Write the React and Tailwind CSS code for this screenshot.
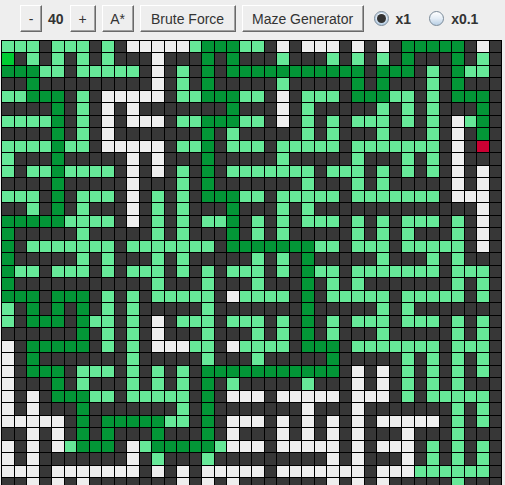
import { useState } from "react";

// # wall, w open, l explored, d final path, s start, e end
const MAZE = [
  "lll#lll#l#wwwwwldddll#w#www#w#w#ddddd#w#",
  "s#l#l#l#l###w###d#d###l###l#l#l#d###d#l#",
  "dddll#lllll#w#l#d#ddddddddddd#ddd#l#dll#",
  "##d#########w#l#d#####l#####d#d###l#d###",
  "llddd#l#wwwww#lldddll#w#lll#dddll#l#ddd#",
  "####d#l#w#w#######d###w#l#####l#l#l###d#",
  "lllld#l#w#www#lldddll#w#l#l#lll#l#l#wld#",
  "####d#l#w#######d#l#####l#l###l###l#w#d#",
  "lllldll#wwwww#lld#lll#lllll#lllllll#w#e#",
  "l###d#####w#w###d#####l#####l###l#l#w###",
  "l#lldllll#w#w#l#d#lllllll#lll#l#l#l#w#w#",
  "####d#####w###l#d#######l###l#l#####w#w#",
  "lll#d#lll#w#l#l#dddll#lllll#lllllll#www#",
  "##l#d#l###w#l#l###d###l#l#############w#",
  "dddddllll#w#l#l#lld#l#l#lll#l#l#lll#l#w#",
  "d#####l#####l#l###d#l#l#####l#l#l###l#w#",
  "d#lllllll#lllllll#dddddddll#lll#lllll#w#",
  "d#####l#l###l#l#####l#l#d#####l###l#l###",
  "dll#lll#l#lll#l#l#lll#l#dll#lllllll#lll#",
  "d###########l###l###l###d#l#l#######l#l#",
  "ddd#ddd#l#l#lllll#wllll#d#lllll#lllll#l#",
  "l#d#d#d#l#l#####l#######d#####l#l#######",
  "l#ddd#dll#l#w#lll#lll#l#d#l#lll#lll#l#l#",
  "######d#l#l#w###l###l#l#d#l###l#####l#l#",
  "w#ddddd#l#l#wwwll#wllll#ddd#lllllll#lll#",
  "w#d#######l#####l###l#####d#####l#l#l#l#",
  "w#ddd#lll#l#l#l#ddddddddddd#w#w#l#l#l#l#",
  "w###d#l###l#l#l#d#l#####l###w#w#l#l#l###",
  "w#w#dddll#lllll#d#www#wwwww#www#l#lllll#",
  "w#w###d#######l#d#######w###w#######l#l#",
  "wwwww#d#dddddll#d#www#w#w#w#w#wwwww#l#l#",
  "##w#w#d#d###d###d#w###w#w#w#w###w###l###",
  "w#w#wlddd#wldddddlwww#wwwww#w#www#l#l#l#",
  "w#w#######w#l###l#########w#w###w#l#l#l#",
  "www#wwwwwww#w#w#wwwww#wwwwwww#wwwllllll#",
  "##w#w#w#######w#w#w#######w#w#w#####l###",
];

const FILL = {
  "#": "bg-[#373737]",
  w: "bg-[#eeeeee]",
  l: "bg-[#66e898]",
  d: "bg-[#039637]",
  s: "bg-[#00cc33]",
  e: "bg-[#cc0033]",
};

function PushButton({ children, width, onClick }) {
  return (
    <button
      type="button"
      onClick={onClick}
      className={`h-[27px] shrink-0 whitespace-nowrap border border-t-white border-l-white border-r-[#696969] border-b-[#696969] bg-[#eeeeee] text-center leading-6 shadow-[inset_-1px_-1px_0_#a0a0a0] ${width}`}
    >
      {children}
    </button>
  );
}

function Speed({ value, checked, onChange }) {
  return (
    <label className="flex items-center gap-[7px] font-bold">
      <input
        type="radio"
        name="speed"
        value={value}
        checked={checked}
        onChange={() => onChange(value)}
        className="grid size-[15px] appearance-none place-items-center rounded-full border border-[#7a8a99] bg-linear-to-b from-white via-[#e4edf6] to-[#b8cfe5] before:size-[9px] before:rounded-full checked:shadow-[inset_0_0_0_1px_#b8cfe5] checked:before:bg-[#333333]"
      />
      {value}
    </label>
  );
}

export default function App() {
  const [size, setSize] = useState(40);
  const [speed, setSpeed] = useState("x1");

  return (
    <div className="h-screen overflow-hidden bg-[#eeeeee] font-['Liberation_Sans',Arial,sans-serif] text-sm text-[#333333]">
      <header className="flex h-10 items-center gap-1.5 pb-[3px] pl-5">
        <PushButton width="w-[22px]" onClick={() => setSize(size - 1)}>-</PushButton>
        <output className="font-bold">{size}</output>
        <PushButton width="w-[26px]" onClick={() => setSize(size + 1)}>+</PushButton>
        <PushButton width="w-8">A*</PushButton>
        <PushButton width="w-24">Brute Force</PushButton>
        <PushButton width="w-[122px]">Maze Generator</PushButton>
        <div className="flex gap-[18px] pl-1">
          <Speed value="x1" checked={speed === "x1"} onChange={setSpeed} />
          <Speed value="x0.1" checked={speed === "x0.1"} onChange={setSpeed} />
        </div>
      </header>
      <main className="ml-px grid w-fit auto-rows-[12px_13px] grid-cols-[repeat(20,13px_12px)] border-r border-black">
        {MAZE.map((row, y) =>
          [...row].map((cell, x) => (
            <div
              key={`${x}-${y}`}
              className={`border-t border-l border-black ${x === 0 ? "col-start-1" : ""} ${FILL[cell]}`}
            />
          ))
        )}
      </main>
    </div>
  );
}
